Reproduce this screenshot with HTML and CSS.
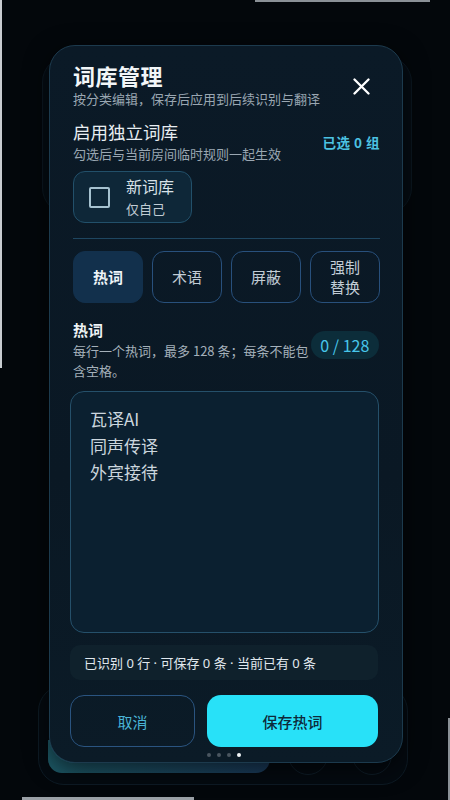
FILE: index.html
```html
<!DOCTYPE html>
<html lang="zh-CN">
<head>
<meta charset="utf-8">
<title>词库管理</title>
<link rel="stylesheet" href="styles.css">
</head>
<body>
<div class="backdrop">
  <div class="ghost-card"></div>
  <div class="ghost-bottom"></div>
  <div class="ghost-bar"></div>
  <div class="ghost-circle c1"></div>
  <div class="ghost-circle c2"></div>
  <div class="edge edge-left"></div>
  <div class="edge edge-top"></div>
  <div class="edge edge-bottom"></div>
  <div class="edge edge-right"></div>
</div>
<div class="modal">
  <div class="header">
    <div class="header-text">
      <h1 class="title">词库管理</h1>
      <p class="subtitle">按分类编辑，保存后应用到后续识别与翻译</p>
    </div>
    <button class="close" aria-label="关闭">
      <svg width="17" height="17" viewBox="0 0 17 17"><path d="M1.5 1.5 L15.5 15.5 M15.5 1.5 L1.5 15.5" stroke="#ffffff" stroke-width="2.3" stroke-linecap="round" fill="none"/></svg>
    </button>
  </div>

  <div class="lib-row">
    <div>
      <h2 class="lib-title">启用独立词库</h2>
      <p class="lib-sub">勾选后与当前房间临时规则一起生效</p>
    </div>
    <span class="selected">已选 0 组</span>
  </div>

  <label class="lib-card">
    <span class="checkbox"></span>
    <span class="lib-card-text">
      <span class="lib-name">新词库</span>
      <span class="lib-owner">仅自己</span>
    </span>
  </label>

  <div class="divider"></div>

  <div class="tabs">
    <button class="tab active">热词</button>
    <button class="tab">术语</button>
    <button class="tab">屏蔽</button>
    <button class="tab">强制<br>替换</button>
  </div>

  <div class="field-head">
    <div class="field-info">
      <h3 class="field-label">热词</h3>
      <p class="field-desc">每行一个热词，最多 128 条；每条不能包含空格。</p>
    </div>
    <span class="count">0 / 128</span>
  </div>

  <div class="textarea">瓦译AI<br>同声传译<br>外宾接待</div>

  <div class="status">已识别 0 行 · 可保存 0 条 · 当前已有 0 条</div>

  <div class="actions">
    <button class="btn btn-cancel">取消</button>
    <button class="btn btn-save">保存热词</button>
  </div>

  <div class="dots">
    <span class="dot"></span><span class="dot"></span><span class="dot"></span><span class="dot on"></span>
  </div>
</div>
</body>
</html>
```

FILE: styles.css
```css
* { box-sizing: border-box; }
html, body { margin: 0; padding: 0; }
body {
  width: 450px;
  height: 800px;
  overflow: hidden;
  background: #03070b;
  font-family: "Noto Sans CJK SC", "Noto Sans", sans-serif;
  position: relative;
  padding-top: 45px;
}
h1, h2, h3, p { margin: 0; font-weight: normal; }
button { font-family: inherit; cursor: pointer; }

.backdrop { position: absolute; inset: 0; pointer-events: none; }
.ghost-card {
  position: absolute; left: 42px; top: 56px; width: 370px; height: 158px;
  border-radius: 26px; background: #050c13; border: 1px solid #0b1720;
}
.ghost-bottom {
  position: absolute; left: 38px; top: 685px; width: 370px; height: 100px;
  border-radius: 26px; background: #040a10; border: 1px solid #0d1a24;
}
.ghost-bar {
  position: absolute; left: 48px; top: 740px; width: 222px; height: 33px;
  border-radius: 0 0 14px 14px;
  background: linear-gradient(90deg, #1d5966, #1a3a5a);
}
.ghost-circle {
  position: absolute; top: 735px; width: 40px; height: 40px; border-radius: 50%;
  border: 1px solid #0f1d28;
}
.ghost-circle.c1 { left: 288px; }
.ghost-circle.c2 { left: 352px; }
.edge { position: absolute; background: #c8ccd0; }
.edge-left { left: 0; top: 0; width: 2px; height: 368px; }
.edge-top { left: 255px; top: 0; width: 175px; height: 2px; background: #8a9096; }
.edge-bottom { left: 22px; top: 797px; width: 172px; height: 3px; background: #9aa0a6; }
.edge-right { left: 448px; top: 718px; width: 2px; height: 82px; background: #8a9096; }

.modal {
  position: relative;
  margin-left: 49px;
  width: 354px;
  height: 718px;
  border-radius: 26px;
  border: 1px solid #1c3a4d;
  background: linear-gradient(180deg, #0b1a27 0%, #0a1824 60%, #0b1b27 100%);
  padding: 15px 22px 0 23px;
  display: flex;
  flex-direction: column;
  box-shadow: 0 6px 24px rgba(0,0,0,0.6);
}

.header { display: flex; align-items: flex-start; justify-content: space-between; }
.title { font-size: 22px; line-height: 28px; font-weight: 700; color: #f2f6f8; letter-spacing: 0.5px; }
.subtitle { margin-top: 1px; font-size: 13px; line-height: 18px; color: #9aa7b2; }
.close {
  margin-top: 17px; margin-right: 10px;
  background: none; border: 0; padding: 0; width: 17px; height: 17px;
  display: flex;
}

.lib-row { margin-top: 12px; display: flex; align-items: center; justify-content: space-between; }
.lib-title { font-size: 17.5px; line-height: 24px; color: #e8eef2; font-weight: 400; }
.lib-sub { margin-top: 1px; font-size: 13px; line-height: 18px; color: #9aa7b2; }
.selected { font-size: 13.5px; font-weight: 700; color: #4cc2e2; letter-spacing: 0.5px; margin-right: 0; }

.lib-card {
  margin-top: 8px;
  width: 119px; height: 52px;
  border-radius: 12px;
  background: #0e2738;
  border: 1px solid #22506a;
  display: flex; align-items: center;
  padding-left: 15px; gap: 16px;
}
.checkbox {
  width: 21px; height: 21px; border: 2px solid #a6c2d0; border-radius: 2px; flex-shrink: 0;
}
.lib-card-text { display: flex; flex-direction: column; gap: 3px; }
.lib-name { font-size: 16px; line-height: 21px; color: #d8e2e8; }
.lib-owner { font-size: 13px; line-height: 18px; color: #c0ccd4; }

.divider { margin-top: 15px; height: 1px; background: #1e4660; }

.tabs {
  margin-top: 12px;
  display: grid; grid-template-columns: repeat(4, 1fr); gap: 9px;
}
.tab {
  height: 52px; border-radius: 12px;
  background: transparent; border: 1.5px solid #28507c;
  color: #c2cdd6; font-size: 15px; line-height: 20px; padding: 0;
}
.tab.active { background: #12304c; border-color: #12304c; color: #eef4f8; font-weight: 700; }

.field-head { margin-top: 16px; display: flex; align-items: center; justify-content: space-between; }
.field-info { width: 240px; }
.field-label { font-size: 15px; line-height: 22px; font-weight: 700; color: #eef3f6; }
.field-desc { font-size: 13px; line-height: 20px; color: #a4b0ba; }
.count {
  width: 69px; height: 28px; border-radius: 14px;
  background: #0c2d3a; color: #48c6ea; font-size: 16px;
  display: flex; align-items: center; justify-content: center;
  margin-top: -11px; margin-right: 1px;
}

.textarea {
  margin-top: 10px; margin-left: -3px; margin-right: 1px;
  height: 242px; border-radius: 14px;
  background: #0b2030; border: 1px solid #25506a;
  padding: 14px 19px;
  font-size: 17px; line-height: 26.5px; color: #cbd6de;
}

.status {
  margin-top: 12px; margin-left: -3px; margin-right: 2px;
  height: 35px; border-radius: 10px;
  background: #0f212c;
  padding-left: 14px;
  display: flex; align-items: center;
  font-family: "Noto Sans", "Noto Sans CJK SC", sans-serif;
  font-size: 13px; color: #e0e8ee;
}

.actions { margin-top: 15px; margin-left: -3px; margin-right: 2px; display: flex; gap: 12px; height: 52px; }
.btn { height: 52px; border-radius: 14px; font-size: 15px; padding: 0; }
.btn-cancel { width: 125px; background: transparent; border: 1.5px solid #2a5480; color: #4ab4d6; }
.btn-save { flex: 1; background: #28e1f8; border: 0; color: #0d2a3a; font-weight: 500; }

.dots { margin-top: 6px; display: flex; justify-content: center; gap: 6px; padding-right: 6px; }
.dot { width: 4px; height: 4px; border-radius: 50%; background: #4a5660; }
.dot.on { background: #f2f6f8; }
```
